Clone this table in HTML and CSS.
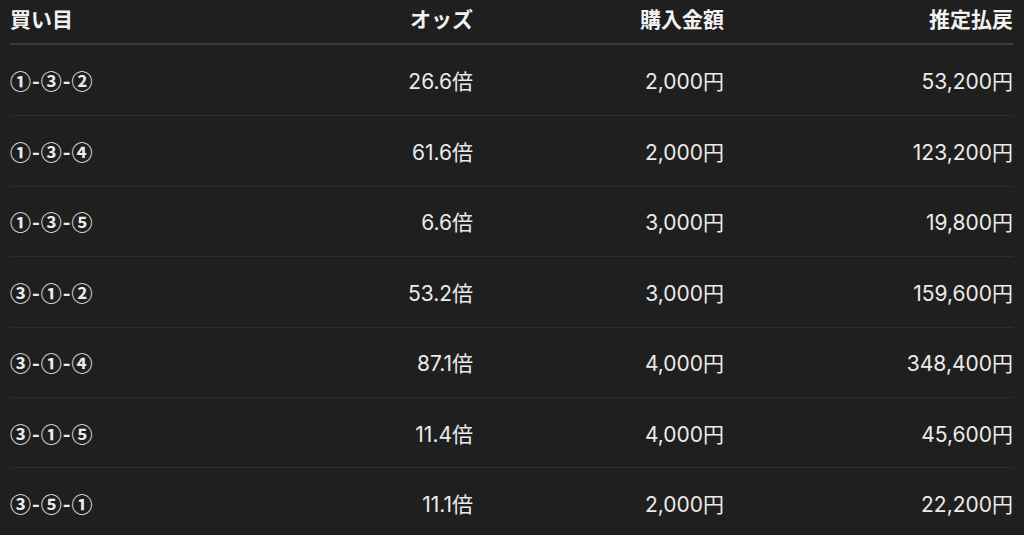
FILE: index.html
```html
<!DOCTYPE html>
<html lang="ja">
<head>
<meta charset="utf-8">
<link rel="stylesheet" href="styles.css">
</head>
<body>
<div class="table">
  <div class="row head">
    <div class="cell c1">買い目</div>
    <div class="cell num">オッズ</div>
    <div class="cell num">購入金額</div>
    <div class="cell num">推定払戻</div>
  </div>
  <div class="row">
    <div class="cell c1 combo">①-③-②</div>
    <div class="cell num">26.6倍</div>
    <div class="cell num">2,000円</div>
    <div class="cell num">53,200円</div>
  </div>
  <div class="row">
    <div class="cell c1 combo">①-③-④</div>
    <div class="cell num">61.6倍</div>
    <div class="cell num">2,000円</div>
    <div class="cell num">123,200円</div>
  </div>
  <div class="row">
    <div class="cell c1 combo">①-③-⑤</div>
    <div class="cell num">6.6倍</div>
    <div class="cell num">3,000円</div>
    <div class="cell num">19,800円</div>
  </div>
  <div class="row">
    <div class="cell c1 combo">③-①-②</div>
    <div class="cell num">53.2倍</div>
    <div class="cell num">3,000円</div>
    <div class="cell num">159,600円</div>
  </div>
  <div class="row">
    <div class="cell c1 combo">③-①-④</div>
    <div class="cell num">87.1倍</div>
    <div class="cell num">4,000円</div>
    <div class="cell num">348,400円</div>
  </div>
  <div class="row">
    <div class="cell c1 combo">③-①-⑤</div>
    <div class="cell num">11.4倍</div>
    <div class="cell num">4,000円</div>
    <div class="cell num">45,600円</div>
  </div>
  <div class="row">
    <div class="cell c1 combo">③-⑤-①</div>
    <div class="cell num">11.1倍</div>
    <div class="cell num">2,000円</div>
    <div class="cell num">22,200円</div>
  </div>
</div>
</body>
</html>
```

FILE: styles.css
```css
html, body {
  margin: 0;
  padding: 0;
  background: #1f1f1f;
  overflow: hidden;
}
body {
  font-family: "Inter", "Noto Sans CJK JP", sans-serif;
  color: #ebebeb;
  font-size: 21px;
}
.table {
  padding: 0 11px 0 10px;
}
.row {
  display: grid;
  grid-template-columns: 1fr 251px 251px 289px;
  align-items: center;
  height: 70.4px;
  box-sizing: border-box;
  border-top: 1px solid #2c2c2c;
}
.row.head {
  height: 45px;
  border-top: none;
  border-bottom: 2px solid #3b3b3b;
  padding-bottom: 8px;
  font-weight: 700;
  font-size: 21px;
  font-family: "Noto Sans CJK JP", sans-serif;
  color: #f2f2f2;
}
.row.head + .row {
  border-top: none;
}
.cell {
  white-space: nowrap;
}
.num {
  text-align: right;
}
.combo {
  font-family: "Noto Sans CJK JP", sans-serif;
  font-size: 21px;
  font-weight: 700;
  letter-spacing: 1px;
}
```
